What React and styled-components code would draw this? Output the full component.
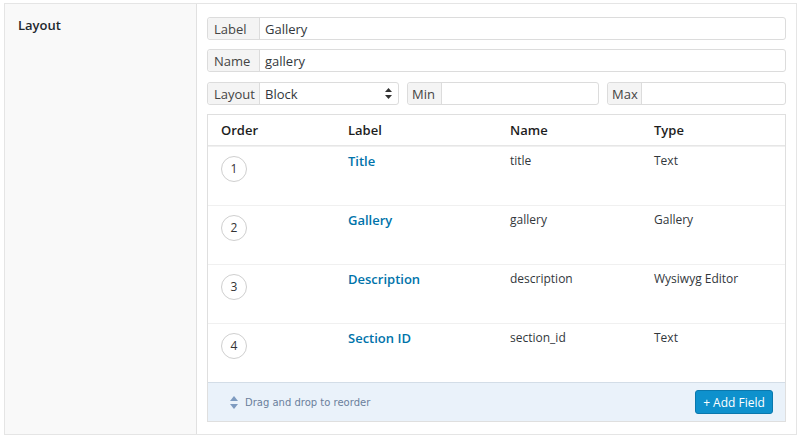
import React from "react";
import styled, { createGlobalStyle } from "styled-components";

const GlobalStyle = createGlobalStyle`
  html, body {
    margin: 0;
    padding: 0;
    background: #fff;
  }
  body {
    font-family: "Open Sans", "Liberation Sans", sans-serif;
    color: #333;
  }
`;

const fields = [
  { order: 1, label: "Title", name: "title", type: "Text" },
  { order: 2, label: "Gallery", name: "gallery", type: "Gallery" },
  { order: 3, label: "Description", name: "description", type: "Wysiwyg Editor" },
  { order: 4, label: "Section ID", name: "section_id", type: "Text" }
];

const App = () => (
  <>
    <GlobalStyle />
    <Page>
      <SettingRow>
        <SettingLabel>Layout</SettingLabel>
        <SettingBody>
          <InputGroup>
            <Prefix $width={52}>Label</Prefix>
            <Value>Gallery</Value>
          </InputGroup>
          <InputGroup>
            <Prefix $width={52}>Name</Prefix>
            <Value>gallery</Value>
          </InputGroup>
          <InlineInputs>
            <InputGroup>
              <Prefix $width={52}>Layout</Prefix>
              <Value>Block</Value>
              <SelectArrows width="7" height="11" viewBox="0 0 7 11">
                <path d="M3.5 0 L7 4 L0 4 Z" fill="#333" />
                <path d="M3.5 11 L7 7 L0 7 Z" fill="#333" />
              </SelectArrows>
            </InputGroup>
            <InputGroup>
              <Prefix $width={34} $narrow>Min</Prefix>
              <Value />
            </InputGroup>
            <InputGroup>
              <Prefix $width={34} $narrow>Max</Prefix>
              <Value />
            </InputGroup>
          </InlineInputs>

          <FieldTable>
            <HeadRow>
              <HeadCell>Order</HeadCell>
              <HeadCell>Label</HeadCell>
              <HeadCell>Name</HeadCell>
              <HeadCell>Type</HeadCell>
            </HeadRow>
            {fields.map(f => (
              <FieldRow key={f.order}>
                <Cell>
                  <OrderBadge>{f.order}</OrderBadge>
                </Cell>
                <Cell>
                  <FieldLink>{f.label}</FieldLink>
                </Cell>
                <Cell>{f.name}</Cell>
                <Cell>{f.type}</Cell>
              </FieldRow>
            ))}
            <Footer>
              <DragHint>
                <svg width="8" height="13" viewBox="0 0 8 13">
                  <path d="M4 0 L8 5 L0 5 Z" fill="#7e9bc0" />
                  <path d="M4 13 L8 8 L0 8 Z" fill="#7e9bc0" />
                </svg>
                Drag and drop to reorder
              </DragHint>
              <AddButton>+ Add Field</AddButton>
            </Footer>
          </FieldTable>
        </SettingBody>
      </SettingRow>
    </Page>
  </>
);

export default App;

const Page = styled.div`
  padding: 3px 3px 0 4px;
`;

const SettingRow = styled.div`
  display: grid;
  grid-template-columns: 192px 1fr;
  border: 1px solid #e5e5e5;
`;

const SettingLabel = styled.div`
  background: #f9f9f9;
  border-right: 1px solid #e1e1e1;
  padding: 13px 13px;
  font-size: 13px;
  line-height: 16px;
  font-weight: 600;
  color: #23282d;
`;

const SettingBody = styled.div`
  background: #fff;
  padding: 13px 10px 12px 10px;
  display: flex;
  flex-direction: column;
  gap: 9px;
`;

const InputGroup = styled.div`
  display: flex;
  align-items: stretch;
  height: 23px;
  box-sizing: border-box;
  border: 1px solid #dcdcdc;
  border-radius: 3px;
  background: #fff;
  position: relative;
  font-size: 13px;
`;

const Prefix = styled.div`
  display: flex;
  align-items: center;
  box-sizing: border-box;
  width: ${p => p.$width}px;
  padding-left: ${p => (p.$narrow ? 4 : 6)}px;
  background: #f4f4f4;
  border-right: 1px solid #dcdcdc;
  border-radius: 3px 0 0 3px;
  color: #444;
`;

const Value = styled.div`
  flex: 1;
  display: flex;
  align-items: center;
  padding: 0 5px;
  color: #32373c;
`;

const SelectArrows = styled.svg`
  position: absolute;
  right: 6px;
  top: 5px;
`;

const InlineInputs = styled.div`
  display: grid;
  grid-template-columns: 192px 192px 1fr;
  column-gap: 8px;
  margin-top: 1px;
`;

const FieldTable = styled.div`
  border: 1px solid #dfdfdf;
`;

const columns = `127px 162px 144px 1fr`;

const HeadRow = styled.div`
  display: grid;
  grid-template-columns: ${columns};
  height: 30px;
  align-items: center;
  border-bottom: 1px solid #e6e6e6;
`;

const HeadCell = styled.div`
  padding-left: 13px;
  font-size: 13px;
  font-weight: 600;
  color: #1d1d1d;
`;

const FieldRow = styled.div`
  display: grid;
  grid-template-columns: ${columns};
  height: 59px;
  box-sizing: border-box;
  border-top: 1px solid #f0f0f0;
  &:first-of-type {
    border-top: none;
  }
`;

const Cell = styled.div`
  padding: 5px 0 0 13px;
  font-size: 12px;
  line-height: 18px;
  color: #32373c;
`;

const OrderBadge = styled.div`
  margin-top: 4px;
  width: 24px;
  height: 24px;
  border: 1px solid #cfcfcf;
  border-radius: 50%;
  display: flex;
  align-items: center;
  justify-content: center;
  font-size: 12px;
  color: #333;
`;

const FieldLink = styled.a`
  font-size: 13px;
  font-weight: 600;
  color: #0073aa;
  text-decoration: none;
  cursor: pointer;
`;

const Footer = styled.div`
  display: flex;
  align-items: center;
  justify-content: space-between;
  height: 39px;
  box-sizing: border-box;
  padding: 0 12px 0 22px;
  background: #eaf2fa;
  border-top: 1px solid #d3dde7;
`;

const DragHint = styled.div`
  display: flex;
  align-items: center;
  gap: 7px;
  font-family: "Comic Sans MS", "DejaVu Sans", sans-serif;
  font-size: 10px;
  color: #6b7f9c;
`;

const AddButton = styled.button`
  height: 24px;
  width: 78px;
  padding: 0;
  border: 1px solid #0a78ad;
  border-radius: 3px;
  background: #0e91cd;
  color: #fff;
  font-family: "Open Sans", "Liberation Sans", sans-serif;
  font-size: 12px;
  cursor: pointer;
`;
